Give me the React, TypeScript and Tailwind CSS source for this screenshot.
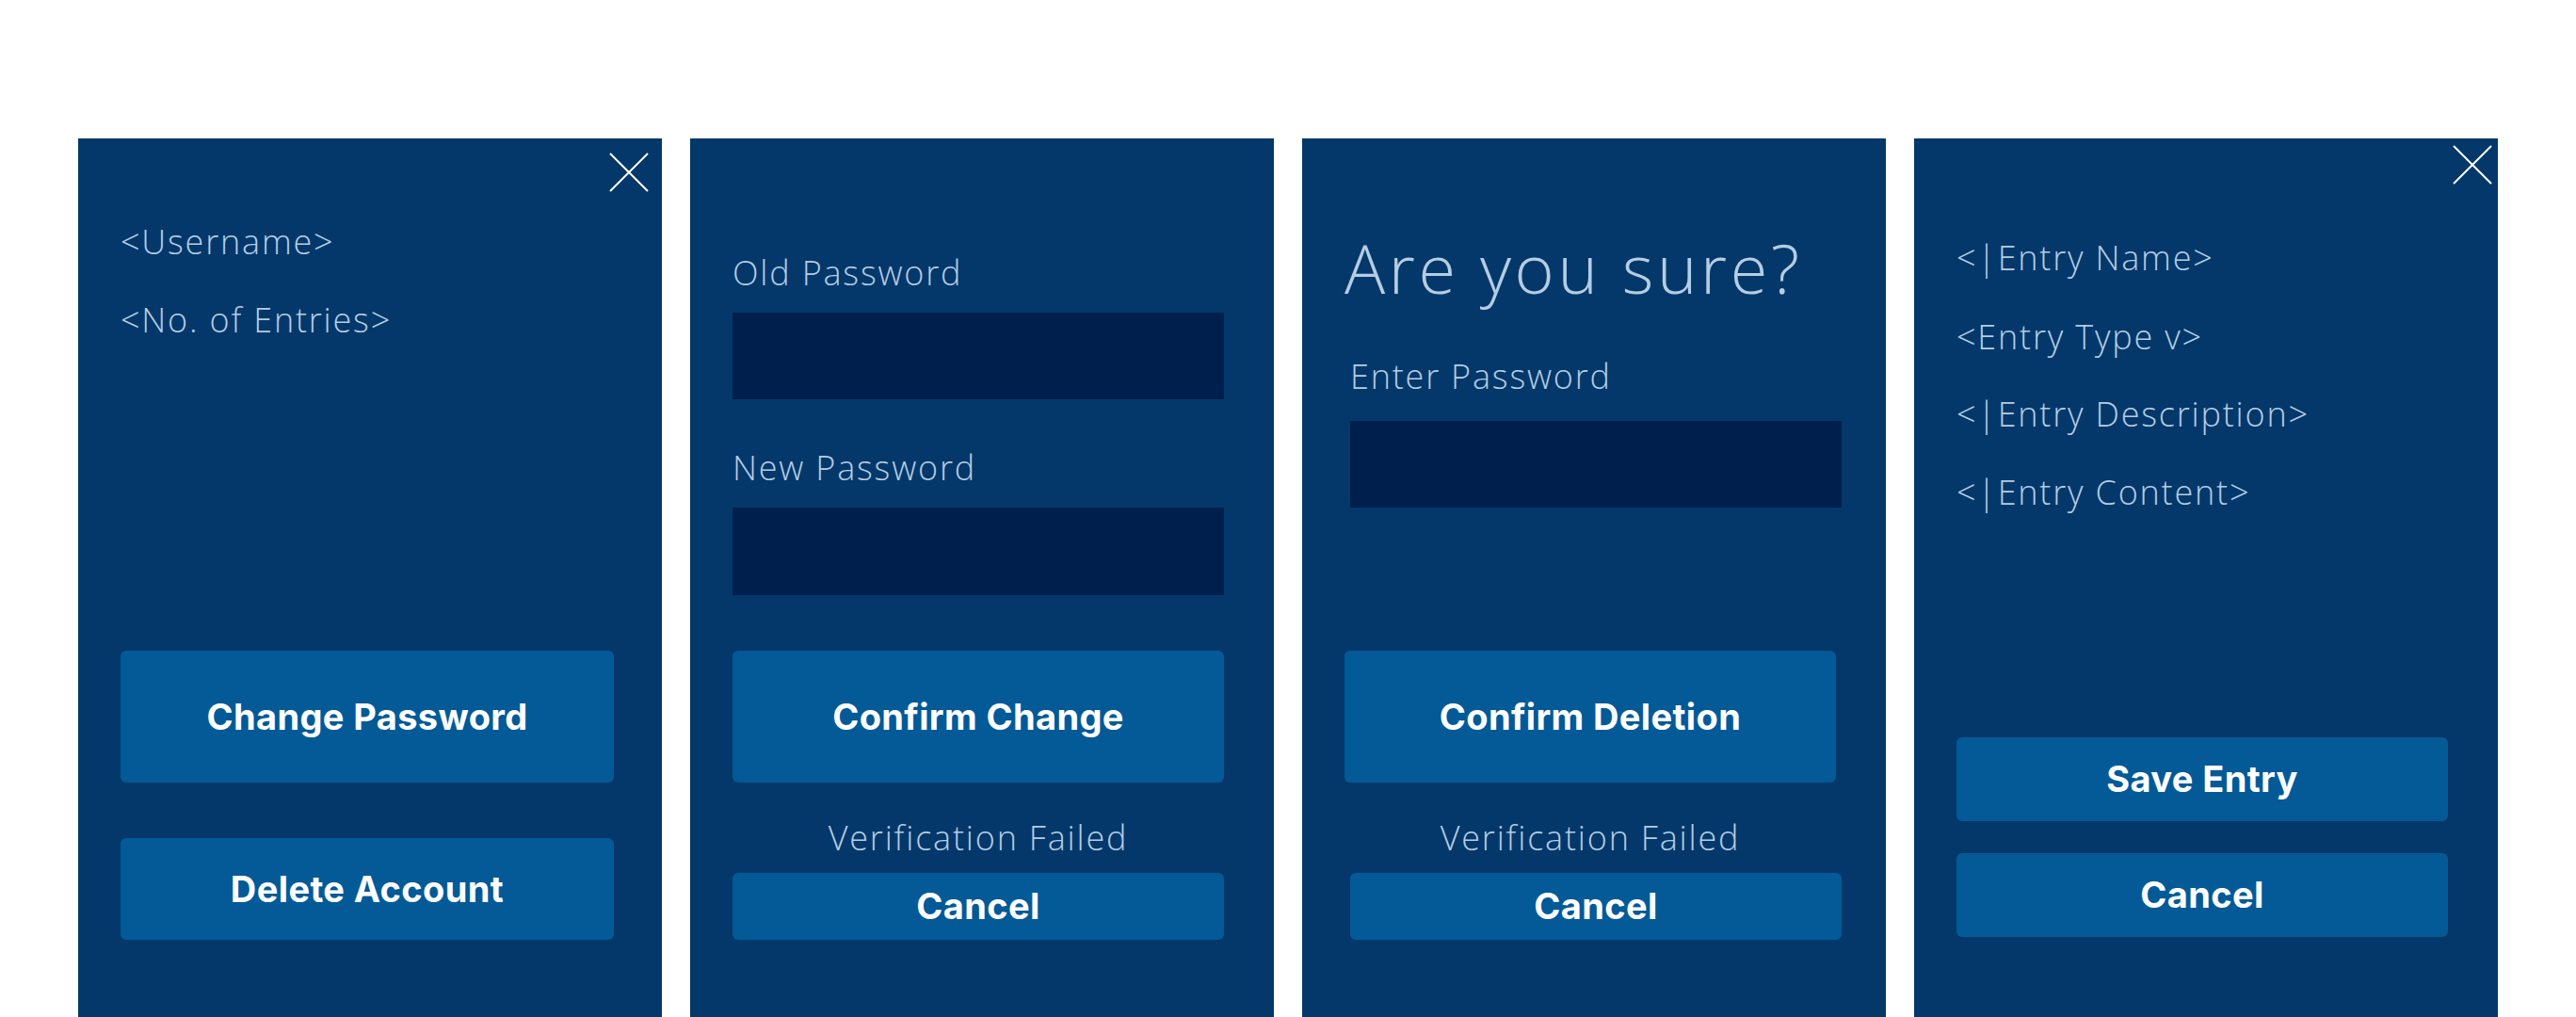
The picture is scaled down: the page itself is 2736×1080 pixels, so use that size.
import React from 'react';

const label =
  "font-['Open_Sans',sans-serif] font-light text-[36px] leading-[40px] tracking-[0.05em] text-[#b5cde2]";
const btn =
  "flex items-center justify-center rounded-[6px] bg-[#035a96] text-white font-['Inter',sans-serif] font-bold text-[38px] tracking-[0.01em]";
const input = 'bg-[#011f4c]';

function CloseIcon() {
  return (
    <svg width="42" height="42" viewBox="0 0 42 42" fill="none">
      <line x1="1" y1="1" x2="41" y2="41" stroke="white" strokeWidth="2" />
      <line x1="41" y1="1" x2="1" y2="41" stroke="white" strokeWidth="2" />
    </svg>
  );
}

function Panel({ children }: { children: React.ReactNode }) {
  return <div className="relative flex h-full w-[620px] flex-col bg-[#04386b]">{children}</div>;
}

export default function App() {
  return (
    <div className="flex h-[1080px] w-full gap-[30px] overflow-hidden bg-white px-[83px] pt-[147px]">
      {/* account */}
      <Panel>
        <div className="absolute right-[14px] top-[15px]">
          <CloseIcon />
        </div>
        <div className="flex flex-col pl-[45px] pt-[90px]">
          <div className={label}>&lt;Username&gt;</div>
          <div className={`${label} mt-[43px]`}>&lt;No. of Entries&gt;</div>
          <div className={`${btn} mt-[331px] h-[140px] w-[524px]`}>Change Password</div>
          <div className={`${btn} mt-[59px] h-[108px] w-[524px]`}>Delete Account</div>
        </div>
      </Panel>

      {/* change password */}
      <Panel>
        <div className="flex flex-col pl-[45px] pt-[123px]">
          <div className={label}>Old Password</div>
          <div className={`${input} mt-[22px] h-[92px] w-[522px]`} />
          <div className={`${label} mt-[53px]`}>New Password</div>
          <div className={`${input} mt-[22px] h-[93px] w-[522px]`} />
          <div className={`${btn} mt-[59px] h-[140px] w-[522px]`}>Confirm Change</div>
          <div className={`${label} mt-[39px] w-[522px] text-center`}>Verification Failed</div>
          <div className={`${btn} mt-[17px] h-[71px] w-[522px]`}>Cancel</div>
        </div>
      </Panel>

      {/* delete account */}
      <Panel>
        <div className="flex flex-col pl-[45px] pt-[97px]">
          <div className="font-['Open_Sans',sans-serif] font-light text-[72px] leading-[80px] tracking-[0.05em] text-[#b5cde2]">
            Are you sure?
          </div>
          <div className={`${label} ml-[6px] mt-[56px]`}>Enter Password</div>
          <div className={`${input} ml-[6px] mt-[27px] h-[92px] w-[522px]`} />
          <div className={`${btn} mt-[152px] h-[140px] w-[522px]`}>Confirm Deletion</div>
          <div className={`${label} mt-[39px] w-[522px] text-center`}>Verification Failed</div>
          <div className={`${btn} ml-[6px] mt-[17px] h-[71px] w-[522px]`}>Cancel</div>
        </div>
      </Panel>

      {/* entry editor */}
      <Panel>
        <div className="absolute right-[6px] top-[7px]">
          <CloseIcon />
        </div>
        <div className="flex flex-col pl-[45px] pt-[107px]">
          <div className={label}>&lt;|Entry Name&gt;</div>
          <div className={`${label} mt-[44px]`}>&lt;Entry Type v&gt;</div>
          <div className={`${label} mt-[42px]`}>&lt;|Entry Description&gt;</div>
          <div className={`${label} mt-[43px]`}>&lt;|Entry Content&gt;</div>
          <div className={`${btn} mt-[240px] h-[89px] w-[522px]`}>Save Entry</div>
          <div className={`${btn} mt-[34px] h-[89px] w-[522px]`}>Cancel</div>
        </div>
      </Panel>
    </div>
  );
}
